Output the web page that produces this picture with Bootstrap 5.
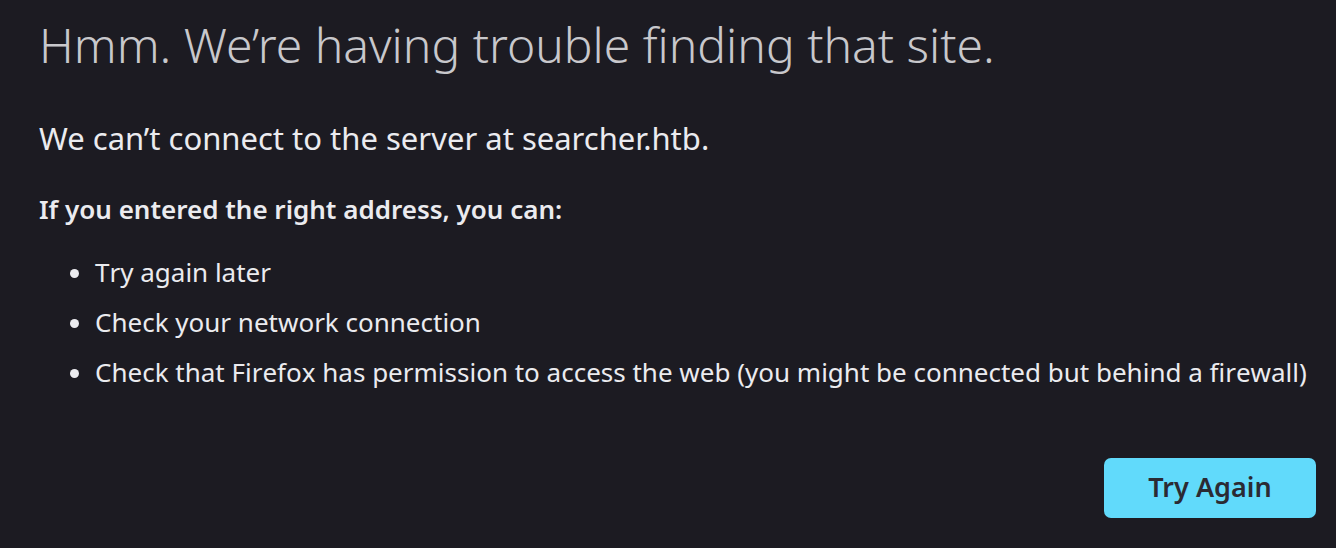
<!DOCTYPE html>
<html lang="en">
<head>
<meta charset="utf-8">
<meta name="viewport" content="width=device-width, initial-scale=1">
<title>Server Not Found</title>
<link href="https://cdn.jsdelivr.net/npm/bootstrap@5.3.0/dist/css/bootstrap.min.css" rel="stylesheet">
<style>
body { background: #1c1b22; color: #ebebef; font-family: "Noto Sans", sans-serif; font-size: 26px; line-height: 34px; }
.error-page { padding: 15px 12px 31px 39px; }
.error-title { font-size: 48px; line-height: 60px; font-weight: 300; color: #c8c8cc; font-variant-ligatures: none; margin-bottom: 43px; }
.error-summary { font-size: 31px; line-height: 40px; margin-bottom: 34px; }
.error-lead { font-weight: 600; line-height: 34px; margin-bottom: 29px; }
.error-tips { padding-left: 56px; margin-bottom: 69px; font-kerning: none; }
.error-tips li + li { margin-top: 16px; }
.btn-retry { --bs-btn-bg: #61dafb; --bs-btn-color: #2b2a33; --bs-btn-hover-bg: #80ebff; width: 212px; height: 60px; font-size: 27px; font-weight: 600; line-height: 34px; border: 0; border-radius: 7px; margin-right: 8px; padding-bottom: 8px; }
</style>
</head>
<body>
<main class="error-page">
<h1 class="error-title">Hmm. We’re having trouble finding that site.</h1>
<p class="error-summary">We can’t connect to the server at searcher.htb.</p>
<p class="error-lead">If you entered the right address, you can:</p>
<ul class="error-tips">
<li>Try again later</li>
<li>Check your network connection</li>
<li>Check that Firefox has permission to access the web (you might be connected but behind a firewall)</li>
</ul>
<div class="d-flex justify-content-end"><button type="button" class="btn btn-retry">Try Again</button></div>
</main>
<script src="https://cdn.jsdelivr.net/npm/bootstrap@5.3.0/dist/js/bootstrap.bundle.min.js"></script>
</body>
</html>
